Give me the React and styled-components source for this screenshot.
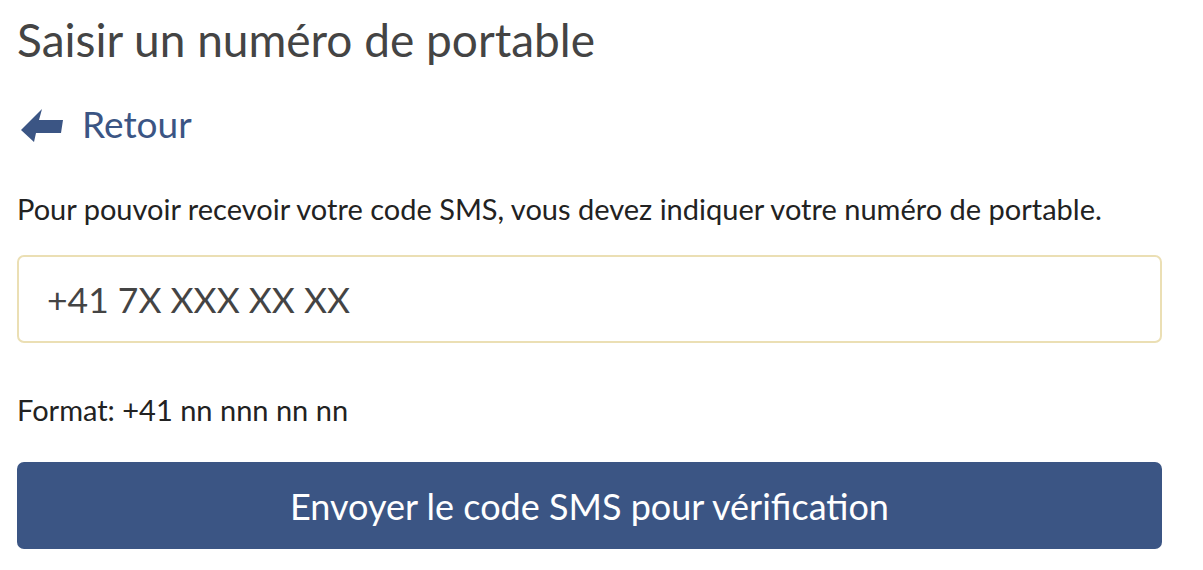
import React from "react";
import styled, { createGlobalStyle } from "styled-components";

const GlobalStyle = createGlobalStyle`
  html, body {
    margin: 0;
    padding: 0;
    background: #fff;
  }
  body {
    font-family: "Lato", "Liberation Sans", sans-serif;
  }
`;

const Page = styled.div`
  width: 1145px;
  padding: 12px 0 0 17px;
  display: flex;
  flex-direction: column;
`;

const Title = styled.h1`
  margin: 0;
  font-size: 46px;
  font-weight: 400;
  color: #444;
  line-height: 56px;
`;

const BackLink = styled.a`
  display: flex;
  align-items: center;
  gap: 18px;
  margin: 34px 0 0 1px;
  color: #3b5584;
  font-size: 37px;
  line-height: 44px;
  text-decoration: none;
  cursor: pointer;

  & > svg {
    margin-top: 3px;
  }
`;

const Text = styled.p`
  margin: ${(p) => p.$top || "0"} 0 0;
  font-size: 29px;
  line-height: 34px;
  color: #222;
`;

const PhoneInput = styled.input`
  box-sizing: border-box;
  width: 100%;
  height: 88px;
  margin-top: 29px;
  padding: 0 28px;
  border: 2px solid #ebdfb4;
  border-radius: 7px;
  font-family: inherit;
  font-size: 35.5px;
  color: #444;
  outline: none;

  &::placeholder {
    color: #444;
  }
`;

const SubmitButton = styled.button`
  width: 100%;
  height: 87px;
  margin-top: 35px;
  border: none;
  border-radius: 7px;
  background: #3b5584;
  color: #fff;
  font-family: inherit;
  font-size: 36px;
  cursor: pointer;
`;

const ArrowIcon = () => (
  <svg width="46" height="40" viewBox="0 0 46 40" aria-hidden="true">
    <polygon
      points="3,24 24,3 21,14 45,14 43,27 18,27 16,36"
      fill="#3b5584"
    />
  </svg>
);

const App = () => {
  return (
    <Page>
      <GlobalStyle />
      <Title>Saisir un numéro de portable</Title>
      <BackLink>
        <ArrowIcon />
        Retour
      </BackLink>
      <Text $top="46px">
        Pour pouvoir recevoir votre code SMS, vous devez indiquer votre numéro
        de portable.
      </Text>
      <PhoneInput type="tel" placeholder="+41 7X XXX XX XX" />
      <Text $top="50px">Format: +41 nn nnn nn nn</Text>
      <SubmitButton>Envoyer le code SMS pour vérification</SubmitButton>
    </Page>
  );
};

export default App;
